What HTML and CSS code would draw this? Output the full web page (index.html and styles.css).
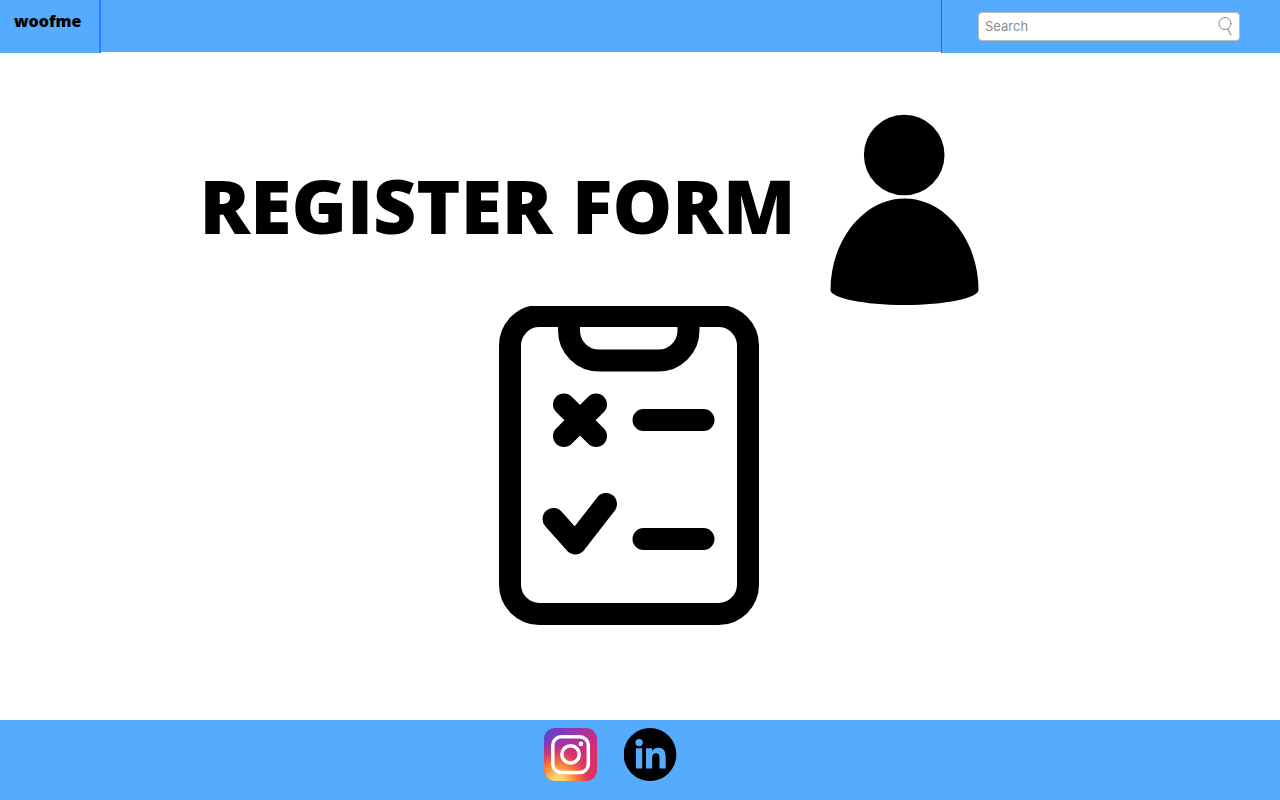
FILE: index.html
```html
<!DOCTYPE html>
<html lang="en">
<head>
<meta charset="utf-8">
<meta name="viewport" content="width=device-width, initial-scale=1">
<title>woofme – Register</title>
<link rel="stylesheet" href="styles.css">
</head>
<body>
<header class="topbar">
  <div class="brand"><a class="brand-link" href="#">woofme</a></div>
  <div class="topbar-space"></div>
  <form class="search-area" role="search">
    <div class="search-box">
      <input class="search-input" type="text" placeholder="Search" aria-label="Search">
      <button class="search-button" type="submit" aria-label="Search">
        <svg width="14" height="20" viewBox="0 0 14 20" fill="none" stroke="#888" stroke-width="1" stroke-linecap="round"><ellipse cx="7" cy="7.500" rx="6" ry="6"/><path d="M9.200 13.200L12.700 19M10.200 13L13.200 18.700"  stroke-width=".7"/></svg>
      </button>
    </div>
  </form>
</header>
<main class="content">
  <div class="hero">
    <h1 class="title">REGISTER FORM</h1>
    <svg class="person" width="149" height="191" viewBox="0 0 149 191" aria-hidden="true"><circle cx="74.200" cy="41" r="40.300"/><path d="M74.500 84.500C115 84.500 148.500 126 148.500 176C148.500 184 115 191 74.500 191S.5 184 .5 176C.5 126 34 84.500 74.500 84.500Z"/></svg>
  </div>
  <div class="illustration">
    <svg width="260" height="319" viewBox="0 0 260 319" fill="none" stroke="#000" stroke-width="22" stroke-linecap="round" stroke-linejoin="round" aria-hidden="true">
      <path d="M40.500 10H219.500A29.500 29.500 0 0 1 249 39.500V278.500A29.500 29.500 0 0 1 219.500 308H40.500A29.500 29.500 0 0 1 11 278.500V39.500A29.500 29.500 0 0 1 40.500 10Z"/>
      <path d="M70 12V24.500A30 30 0 0 0 100 54.500H159.500A30 30 0 0 0 189.500 24.500V12"/>
      <path d="M65 98.500L97 130M97 98.500L65 130M144.500 114H204.500M144.500 233H204.500M54.500 213L76.300 237.500L107 198"/>
    </svg>
  </div>
</main>
<footer class="footer">
  <a class="social" href="#" aria-label="Instagram">
    <svg width="53" height="53" viewBox="0 0 53 53">
      <defs>
        <linearGradient id="base" x1="0" y1="0" x2="1" y2="1"><stop offset="0" stop-color="#5149d0"/><stop offset=".3" stop-color="#9336b2"/><stop offset=".65" stop-color="#d62b76"/><stop offset="1" stop-color="#ee2b58"/></linearGradient>
        <radialGradient id="glow" cx=".26" cy="1.030" r=".82"><stop offset="0" stop-color="#ffe07a"/><stop offset=".16" stop-color="#ffd06a"/><stop offset=".45" stop-color="#fa7a35"/><stop offset=".7" stop-color="#e23b5c" stop-opacity=".8"/><stop offset="1" stop-color="#d62b76" stop-opacity="0"/></radialGradient>
      </defs>
      <rect width="53" height="53" rx="11" fill="url(#base)"/><rect width="53" height="53" rx="11" fill="url(#glow)"/>
      <g fill="none" stroke="#fff" stroke-width="3.500"><rect x="8.800" y="8.700" width="35.500" height="35.800" rx="8.500"/><circle cx="26.600" cy="26.400" r="8.700"/></g><circle cx="36.900" cy="15.900" r="2.300" fill="#fff"/>
    </svg>
  </a>
  <a class="social" href="#" aria-label="LinkedIn">
    <svg width="53" height="53" viewBox="0 0 53 53">
      <circle cx="26" cy="26.500" r="26.400"/>
      <g fill="#55acff"><circle cx="15.100" cy="14.600" r="3.700"/><path d="M12 20.200H18.200V40.500H12ZM22 20.200H28V23C29.300 20.900 31.600 19.700 34.200 19.700C40.200 19.700 41.700 23.700 41.700 29.300V40.500H35.500V30.500C35.500 27.700 35.200 25.200 32.100 25.200C29 25.200 28.200 27.600 28.200 30.400V40.500H22Z"/></g>
    </svg>
  </a>
</footer>
</body>
</html>
```
FILE: styles.css
```css
* { box-sizing: border-box; }
body {
  margin: 0;
  min-height: 100vh;
  display: flex;
  flex-direction: column;
  background: #fff;
  color: #000;
  font-family: "Open Sans", sans-serif;
}
svg { display: block; }
.topbar { display: flex; height: 53px; }
.brand {
  width: 101px;
  padding: 10px 14px;
  background: #55acff;
  border-right: 2px solid #3b78ff;
}
.brand-link {
  display: block;
  color: #000;
  font-size: 16px;
  line-height: 22px;
  font-weight: 800;
  text-decoration: none;
}
.topbar-space { flex: 1; background: #55acff; margin-bottom: 1px; }
.search-area {
  width: 339px;
  padding: 12px 40px 12px 36px;
  background: #55acff;
  border-left: 1px solid #2f5fff;
}
.search-box {
  display: flex;
  align-items: center;
  height: 29px;
  padding: 0 7px 2px 6px;
  background: #fff;
  border: 1px solid #bbb;
  border-radius: 4px;
}
.search-input {
  flex: 1;
  min-width: 0;
  padding: 0;
  border: 0;
  outline: 0;
  background: none;
  font-family: Inter, sans-serif;
  font-size: 13px;
}
.search-input::placeholder { color: #8c8c8c; opacity: 1; }
.search-button { padding: 0; border: 0; background: none; }
.content { flex: 1; padding-top: 61px; }
.hero {
  display: flex;
  justify-content: center;
  gap: 34px;
  padding-right: 102px;
}
.title {
  margin: 40px 0 0;
  font-size: 75px;
  line-height: 102px;
  font-weight: 800;
  white-space: nowrap;
}
.person { flex: none; }
.illustration {
  display: flex;
  justify-content: center;
  padding: 1px 22px 0 0;
}
.footer {
  display: flex;
  justify-content: center;
  gap: 27px;
  height: 80px;
  padding: 8px 60px 0 0;
  background: #55acff;
}
```
